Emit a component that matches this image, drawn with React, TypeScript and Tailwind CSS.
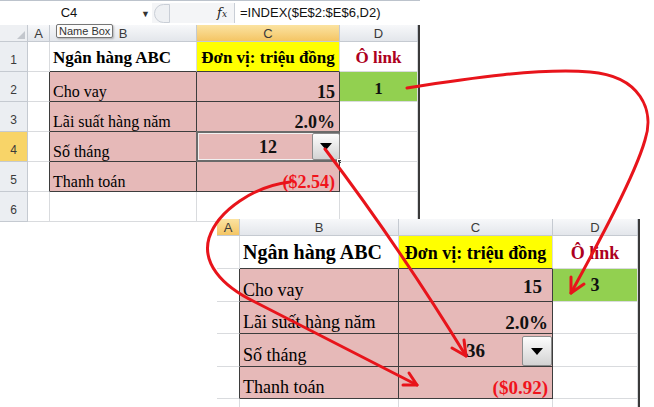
import clsx, { type ClassValue } from "clsx";
import { twMerge } from "tailwind-merge";
import type { ReactNode } from "react";

const SERIF = "font-['Liberation_Serif',serif]";
const SANS = "font-['Liberation_Sans',Arial,sans-serif]";

const cn = (...inputs: ClassValue[]) => twMerge(clsx(inputs));

interface CellProps {
  r?: boolean;
  b?: boolean;
  className?: string;
  children?: ReactNode;
}

// Excel style cell: right/bottom borders, dark when they touch the pink block
function Cell({ r, b, className, children }: CellProps) {
  return (
    <div
      className={cn(
        "relative flex min-w-0 items-end whitespace-nowrap border-r border-b px-[3px]",
        r ? "border-r-[#3d3d3d]" : "border-r-[#d9dbde]",
        b ? "border-b-[#3d3d3d]" : "border-b-[#d9dbde]",
        className,
        "leading-none"
      )}
    >
      {children}
    </div>
  );
}

function ColHead({ label, active }: { label: string; active?: boolean }) {
  return (
    <div
      className={cn(
        "flex items-center justify-center border-r border-b border-[#c5cad1] bg-linear-to-b text-[13px] text-[#3a3a3a]",
        SANS,
        active ? "from-[#fbe3a1] to-[#f4c563]" : "from-[#f7f8fa] to-[#e3e6eb]",
        "leading-none"
      )}
    >
      {label}
    </div>
  );
}

function RowHead({ label, active }: { label: string; active?: boolean }) {
  return (
    <div
      className={cn(
        "flex items-center justify-center border-r border-b border-[#c5cad1] pt-[6px] text-[12px] text-[#3a3a3a]",
        SANS,
        active ? "bg-[#f8d468]" : "bg-[#ebeef2]",
        "leading-none"
      )}
    >
      {label}
    </div>
  );
}

function DropButton({ className }: { className: string }) {
  return (
    <div
      className={cn(
        "absolute flex items-center justify-center rounded-[2px] border border-[#8c8c8c] bg-linear-to-b from-[#fdfdfd] to-[#d3d3d3]",
        className
      )}
    >
      <div className="h-0 w-0 border-x-[6px] border-t-[7px] border-x-transparent border-t-black" />
    </div>
  );
}

function FormulaBar() {
  return (
    <div className={cn("flex h-[25px] items-stretch border-t border-[#bcc3cc] pt-[2px] pb-[2px]", SANS)}>
      <div className="relative flex w-[152px] items-center justify-center bg-white pr-[14px] text-[13px] text-[#111]">
        C4
        <span className="absolute right-[2px] top-[5px] text-[9px] text-[#333]">▼</span>
      </div>
      <div className="flex w-[82px] items-center bg-[#f4f5f7]">
        <div className="ml-[2px] h-[19px] w-[16px] rounded-l-full border border-[#c9ced6] bg-[#eef0f3]" />
        <span className="ml-auto mr-[7px] font-['DejaVu_Serif',serif] text-[13px] italic text-[#222]">
          f<span className="text-[9px]">x</span>
        </span>
      </div>
      <div className="flex flex-1 items-center border-l border-[#c9ced6] bg-white pl-[5px] text-[13px] text-[#111]">
        =INDEX($E$2:$E$6,D2)
      </div>
    </div>
  );
}

function TopSheet() {
  const label = cn(SERIF, "bg-[#e6b9b8] pb-[1px] text-[16px] text-black");
  const value = cn(SERIF, "justify-end bg-[#e6b9b8] pb-0 pr-[4px] text-[18px] font-bold text-[#111]");
  return (
    <div className="absolute left-0 top-0 w-[420px] bg-white">
      <FormulaBar />
      <div className="grid grid-cols-[28px_22px_147px_143px_78px] grid-rows-[17px_repeat(6,30px)] border-r-2 border-[#3a3a3a]">
        <div className="relative border-r border-b border-[#c5cad1] bg-[#eef0f3]">
          <div className="absolute bottom-[2px] right-[2px] h-0 w-0 border-b-[8px] border-l-[8px] border-b-[#c3c7cd] border-l-transparent" />
        </div>
        <ColHead label="A" />
        <ColHead label="B" />
        <ColHead label="C" active />
        <ColHead label="D" />

        <RowHead label="1" />
        <Cell />
        <Cell b className={cn(SERIF, "pb-[5px] text-[17px] font-bold text-black")}>Ngân hàng ABC</Cell>
        <Cell b className={cn(SERIF, "justify-center bg-[#ffff00] pb-[5px] text-[17px] font-bold text-black")}>
          Đơn vị: triệu đồng
        </Cell>
        <Cell className={cn(SERIF, "justify-center pb-[5px] text-[17px] font-bold text-[#ad0020]")}>Ô link</Cell>

        <RowHead label="2" />
        <Cell r />
        <Cell r b className={label}>Cho vay</Cell>
        <Cell r b className={value}>15</Cell>
        <Cell className={cn(SERIF, "justify-center bg-[#92d050] pb-[4px] text-[17px] font-bold text-[#111]")}>1</Cell>

        <RowHead label="3" />
        <Cell r />
        <Cell r b className={label}>Lãi suất hàng năm</Cell>
        <Cell r b className={value}>2.0%</Cell>
        <Cell />

        <RowHead label="4" active />
        <Cell r />
        <Cell r b className={label}>Số tháng</Cell>
        <Cell r b className={cn(value, "justify-center pb-[5px] pr-[3px]")}>
          12
          <div className="pointer-events-none absolute -left-px -top-px h-[31px] w-[144px] border-2 border-[#6a6a6a]">
            <div className="h-full w-full border border-[#f1f1f1]" />
          </div>
          <DropButton className="right-[-1px] top-[1px] h-[27px] w-[28px]" />
          <div className="absolute -bottom-[3px] -right-[3px] h-[5px] w-[5px] border border-white bg-[#3d3d3d]" />
        </Cell>
        <Cell />

        <RowHead label="5" />
        <Cell r />
        <Cell r b className={label}>Thanh toán</Cell>
        <Cell r b className={cn(value, "text-[#f0141c]")}>($2.54)</Cell>
        <Cell />

        <RowHead label="6" />
        <Cell />
        <Cell />
        <Cell />
        <Cell />
      </div>
      <div className={cn("absolute left-[56px] top-[24px] rounded-[2px] border border-[#767676] bg-[#fbfbfb] px-[2px] text-[11px] text-[#333] shadow-[1px_1px_2px_rgba(0,0,0,0.25)]", SANS, "leading-[12px]")}>
        Name Box
      </div>
    </div>
  );
}

function BottomSheet() {
  const label = cn(SERIF, "bg-[#e6b9b8] pb-[2px] text-[18px] text-black");
  const value = cn(SERIF, "justify-end bg-[#e6b9b8] pb-[1px] pr-[4px] text-[19px] font-bold text-[#111]");
  return (
    <div className="absolute left-[217px] top-[219px] h-[188px] w-[423px] overflow-hidden bg-white">
      <div className="grid grid-cols-[23px_159px_154px_85px] grid-rows-[17px_33px_33px_32px_33px_32px_30px] border-r-2 border-[#3a3a3a]">
        <ColHead label="A" active />
        <ColHead label="B" />
        <ColHead label="C" />
        <ColHead label="D" />

        <Cell />
        <Cell b className={cn(SERIF, "pb-[6px] text-[20px] font-bold text-black")}>Ngân hàng ABC</Cell>
        <Cell b className={cn(SERIF, "justify-center bg-[#ffff00] pb-[6px] text-[18px] font-bold text-black")}>
          Đơn vị: triệu đồng
        </Cell>
        <Cell className={cn(SERIF, "justify-center pb-[6px] text-[18px] font-bold text-[#ad0020]")}>Ô link</Cell>

        <Cell r />
        <Cell r b className={label}>Cho vay</Cell>
        <Cell r b className={cn(value, "pb-[5px] pr-[10px]")}>15</Cell>
        <Cell className={cn(SERIF, "justify-center bg-[#92d050] pb-[7px] text-[18px] font-bold text-[#111]")}>3</Cell>

        <Cell r />
        <Cell r b className={label}>Lãi suất hàng năm</Cell>
        <Cell r b className={value}>2.0%</Cell>
        <Cell />

        <Cell r />
        <Cell r b className={label}>Số tháng</Cell>
        <Cell r b className={cn(value, "justify-center pb-[6px] pr-[3px]")}>
          36
          <DropButton className="right-0 top-[2px] h-[30px] w-[30px]" />
        </Cell>
        <Cell />

        <Cell r />
        <Cell r b className={label}>Thanh toán</Cell>
        <Cell r b className={cn(value, "text-[#f0141c]")}>($0.92)</Cell>
        <Cell />

        <Cell />
        <Cell />
        <Cell />
        <Cell />
      </div>
    </div>
  );
}

function Arrows() {
  return (
    <svg
      className="pointer-events-none absolute left-0 top-0"
      width={654}
      height={407}
      viewBox="0 0 654 407"
      fill="none"
      stroke="#e8141b"
      strokeWidth={3}
      strokeLinecap="round"
      strokeLinejoin="round"
    >
      {/* D2 link to the second sheet */}
      <path d="M407 88 C470 78 540 68 590 72 C640 76 655 110 645 140 C635 175 600 240 571 293" />
      <path d="M571 277 L571 293 L584 284" />
      {/* dropdown to month value */}
      <path d="M325 149 Q398 245 466 356" />
      <path d="M464 340 L466 356 L452 348" />
      {/* payment loop */}
      <path d="M290 182 C255 186 218 210 209 238 C202 262 220 285 255 302 L417 385" />
      <path d="M409 373 L417 385 L403 385" />
    </svg>
  );
}

export default function App() {
  return (
    <div className="relative h-[407px] w-[654px] overflow-hidden bg-white">
      <TopSheet />
      <BottomSheet />
      <Arrows />
    </div>
  );
}
